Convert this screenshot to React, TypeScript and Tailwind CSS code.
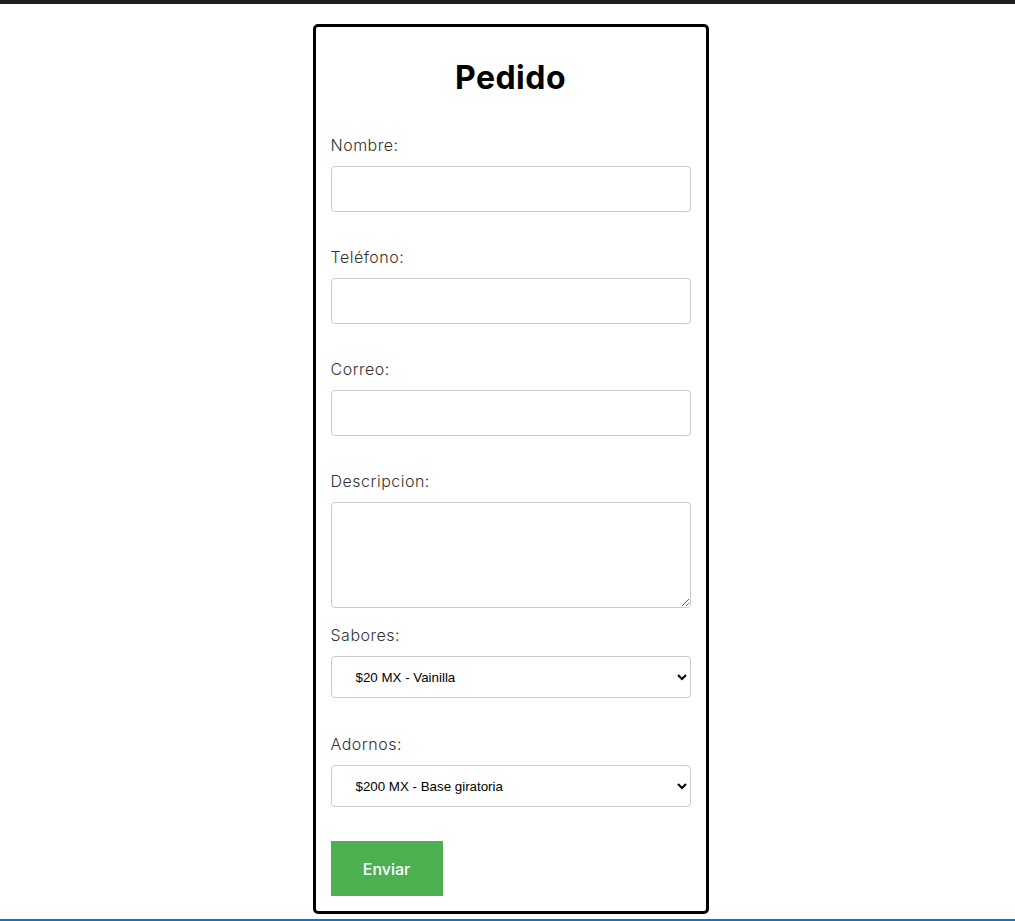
import React from "react";

export default function App() {
  const font = { fontFamily: "Inter, 'Noto Sans', sans-serif" };
  const labelCls = "block text-[16px] leading-[24px] text-[#333] font-light tracking-[0.5px] mb-[9px]";
  const inputCls = "block w-full h-[46px] border border-[#ccc] rounded-[4px] bg-white px-[10px] outline-none";
  const selectCls =
    "block w-full h-[42px] border border-[#ccc] rounded-[4px] bg-white pl-[20px] pr-[6px] text-[13.33px] text-black outline-none";
  return (
    <div className="min-h-[921px] bg-white flex flex-col" style={font}>
      <div className="h-[4px] bg-[#1f1f1f]" />
      <div className="flex justify-center pt-[20px] pl-[6px]">
        <form className="w-[396px] h-[890px] border-[3px] border-black rounded-[5px] px-[15px] pt-[27px] flex flex-col">
          <h1 className="text-[32px] leading-[48px] font-bold text-center text-black tracking-[0.5px]">Pedido</h1>

          <div className="mt-[31px]">
            <label className={labelCls}>Nombre:</label>
            <input type="text" className={inputCls} />
          </div>
          <div className="mt-[33px]">
            <label className={labelCls}>Teléfono:</label>
            <input type="text" className={inputCls} />
          </div>
          <div className="mt-[33px]">
            <label className={labelCls}>Correo:</label>
            <input type="text" className={inputCls} />
          </div>
          <div className="mt-[33px]">
            <label className={labelCls}>Descripcion:</label>
            <textarea className="block w-full h-[106px] border border-[#ccc] rounded-[4px] bg-white px-[10px] outline-none resize-y" />
          </div>
          <div className="mt-[15px]">
            <label className={labelCls}>Sabores:</label>
            <select className={selectCls} style={{ fontFamily: "'Liberation Sans', Arial, sans-serif" }} defaultValue="v">
              <option value="v">$20 MX - Vainilla</option>
              <option value="c">$25 MX - Chocolate</option>
              <option value="f">$25 MX - Fresa</option>
            </select>
          </div>
          <div className="mt-[34px]">
            <label className={labelCls}>Adornos:</label>
            <select className={selectCls} style={{ fontFamily: "'Liberation Sans', Arial, sans-serif" }} defaultValue="b">
              <option value="b">$200 MX - Base giratoria</option>
              <option value="f">$50 MX - Flores</option>
            </select>
          </div>
          <div className="mt-[34px]">
            <button type="button" className="w-[112px] h-[55px] bg-[#4caf50] text-white text-[16px] font-medium">
              Enviar
            </button>
          </div>
        </form>
      </div>
      <div className="mt-[5px] h-[2px] bg-[#0078d4]" />
    </div>
  );
}
